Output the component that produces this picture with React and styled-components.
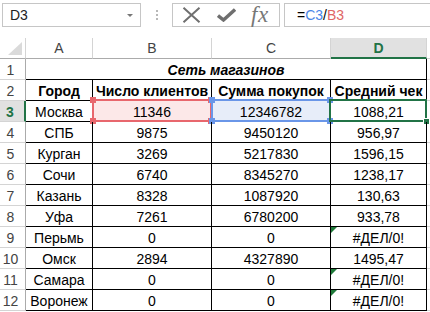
import React from "react";
import styled, { createGlobalStyle } from "styled-components";

const GlobalStyle = createGlobalStyle`
  html, body {
    margin: 0;
    padding: 0;
    background: #ffffff;
  }
  body {
    font-family: "Liberation Sans", Arial, sans-serif;
    font-size: 14px;
    color: #000;
  }
`;

const Page = styled.div`
  width: 430px;
  height: 312px;
  overflow: hidden;
  background: #fff;
`;

// ---- formula bar ----
const FormulaBar = styled.div`
  display: flex;
  align-items: flex-start;
  height: 38px;
  padding: 3px 0 0 2px;
  box-sizing: border-box;
`;

const NameBox = styled.div`
  width: 139px;
  height: 24px;
  box-sizing: border-box;
  border: 1px solid #c6c6c6;
  display: flex;
  align-items: center;
  justify-content: space-between;
  padding: 0 7px 0 7px;
  font-size: 14px;
  color: #222;
`;

const DropArrow = styled.span`
  width: 0;
  height: 0;
  border-left: 3.5px solid transparent;
  border-right: 3.5px solid transparent;
  border-top: 3.5px solid #777;
`;

const Dots = styled.div`
  width: 31px;
  height: 24px;
  display: flex;
  flex-direction: column;
  align-items: center;
  justify-content: center;
  gap: 2px;

  span {
    width: 2px;
    height: 2px;
    background: #b8b8b8;
  }
`;

const ButtonsBox = styled.div`
  width: 108px;
  height: 24px;
  box-sizing: border-box;
  border: 1px solid #c6c6c6;
  display: flex;
  align-items: center;
  padding-left: 9px;
  gap: 16px;
`;

const FxText = styled.span`
  font-family: "Liberation Serif", "Times New Roman", serif;
  font-style: italic;
  font-size: 23px;
  color: #777;
  letter-spacing: 0.5px;
  line-height: 1;
  margin-left: -1px;
  margin-top: -1px;
`;

const FormulaInput = styled.div`
  flex: 1;
  margin-left: 4px;
  height: 24px;
  box-sizing: border-box;
  border: 1px solid #c6c6c6;
  border-right: none;
  display: flex;
  align-items: center;
  padding-left: 12px;
  font-size: 14px;
`;

const Ref = styled.span`
  color: ${(p) => p.color};
`;

// ---- sheet ----
const Sheet = styled.div`
  display: grid;
  grid-template-columns: 26px 67px 119px 119px 96px 1fr;
  grid-auto-rows: 21px;
`;

const Corner = styled.div`
  box-sizing: border-box;
  border-right: 1px solid #d4d4d4;
  border-bottom: 1px solid #ababab;
  display: flex;
  align-items: flex-end;
  justify-content: flex-end;
  padding: 0 3px 3px 0;
`;

const ColHead = styled.div`
  box-sizing: border-box;
  border-right: 1px solid #d4d4d4;
  border-bottom: ${(p) => (p.active ? "2px solid #217346" : "1px solid #ababab")};
  background: ${(p) => (p.active ? "#e1e1e1" : "#fff")};
  color: ${(p) => (p.active ? "#217346" : "#444")};
  font-weight: ${(p) => (p.active ? "bold" : "normal")};
  display: flex;
  align-items: center;
  justify-content: center;
  padding-top: ${(p) => (p.active ? "1px" : "0")};
`;

const RowHead = styled.div`
  box-sizing: border-box;
  border-right: ${(p) => (p.active ? "2px solid #217346" : "1px solid #ababab")};
  border-bottom: 1px solid #d4d4d4;
  background: ${(p) => (p.active ? "#e1e1e1" : "#fff")};
  color: ${(p) => (p.active ? "#217346" : "#444")};
  font-weight: ${(p) => (p.active ? "bold" : "normal")};
  display: flex;
  align-items: center;
  justify-content: center;
  padding: 1px 4px 0 0;
`;

const Cell = styled.div`
  box-sizing: border-box;
  position: relative;
  border-right: 1px solid #000;
  border-bottom: 1px solid #000;
  display: flex;
  align-items: center;
  justify-content: center;
  padding-top: 1px;
  white-space: nowrap;
  font-weight: ${(p) => (p.bold ? "bold" : "normal")};
  font-style: ${(p) => (p.italic ? "italic" : "normal")};
  background: ${(p) => p.fill || "transparent"};
  grid-column: ${(p) => (p.span ? `span ${p.span}` : "auto")};
`;

const Outside = styled.div`
  box-sizing: border-box;
  border-bottom: 1px solid #d4d4d4;
`;

const RefBox = styled.div`
  position: absolute;
  top: -2px;
  left: -1px;
  right: -1px;
  bottom: -1px;
  border: 2px solid ${(p) => p.color};
  pointer-events: none;
`;

const Handle = styled.span`
  position: absolute;
  width: 6px;
  height: 6px;
  background: ${(p) => p.color};
  ${(p) => (p.top ? "top: -4px;" : "bottom: -4px;")}
  ${(p) => (p.left ? "left: -4px;" : "right: -4px;")}
`;

const Selection = styled.div`
  position: absolute;
  top: -2px;
  left: -2px;
  right: -1px;
  bottom: -1px;
  border: 2px solid #217346;
  pointer-events: none;
`;

const FillHandle = styled.span`
  position: absolute;
  right: -5px;
  bottom: -5px;
  width: 5px;
  height: 5px;
  background: #217346;
  border: 1px solid #fff;
`;

const ErrorMark = styled.span`
  position: absolute;
  top: 0;
  left: 0;
  width: 0;
  height: 0;
  border-top: 6px solid #1f7a3a;
  border-right: 6px solid transparent;
`;

const rows = [
  ["Москва", "11346", "12346782", "1088,21"],
  ["СПБ", "9875", "9450120", "956,97"],
  ["Курган", "3269", "5217830", "1596,15"],
  ["Сочи", "6740", "8345270", "1238,17"],
  ["Казань", "8328", "1087920", "130,63"],
  ["Уфа", "7261", "6780200", "933,78"],
  ["Перьмь", "0", "0", "#ДЕЛ/0!"],
  ["Омск", "2894", "4327890", "1495,47"],
  ["Самара", "0", "0", "#ДЕЛ/0!"],
  ["Воронеж", "0", "0", "#ДЕЛ/0!"],
];

const RefCorners = ({ color }) => (
  <>
    <Handle color={color} top left />
    <Handle color={color} top />
    <Handle color={color} left />
    <Handle color={color} />
  </>
);

const App = () => {
  return (
    <Page>
      <GlobalStyle />
      <FormulaBar>
        <NameBox>
          D3
          <DropArrow />
        </NameBox>
        <Dots>
          <span />
          <span />
          <span />
        </Dots>
        <ButtonsBox>
          <svg width="19" height="16" viewBox="0 0 19 16">
            <path d="M1.5 0.8 L17.5 15.2 M17.5 0.8 L1.5 15.2" stroke="#6f6f6f" strokeWidth="2" fill="none" />
          </svg>
          <svg width="19" height="14" viewBox="0 0 19 14">
            <path d="M1 7.5 L6.5 12 L18 1.5" stroke="#6f6f6f" strokeWidth="3.4" fill="none" />
          </svg>
          <FxText>fx</FxText>
        </ButtonsBox>
        <FormulaInput>
          =<Ref color="#4a86e8">C3</Ref>/<Ref color="#e06666">B3</Ref>
        </FormulaInput>
      </FormulaBar>

      <Sheet>
        <Corner>
          <svg width="14" height="13" viewBox="0 0 14 13">
            <polygon points="14,0 14,13 0,13" fill="#dadada" />
          </svg>
        </Corner>
        <ColHead>A</ColHead>
        <ColHead>B</ColHead>
        <ColHead>C</ColHead>
        <ColHead active>D</ColHead>
        <Outside />

        <RowHead>1</RowHead>
        <Cell span={4} bold italic>
          Сеть магазинов
        </Cell>
        <Outside />

        <RowHead>2</RowHead>
        <Cell bold>Город</Cell>
        <Cell bold>Число клиентов</Cell>
        <Cell bold>Сумма покупок</Cell>
        <Cell bold>Средний чек</Cell>
        <Outside />

        {rows.map((r, i) => {
          const n = i + 3;
          const first = n === 3;
          const isError = r[3].startsWith("#");
          return (
            <React.Fragment key={n}>
              <RowHead active={first}>{n}</RowHead>
              <Cell>{r[0]}</Cell>
              <Cell fill={first ? "#fce8e8" : undefined}>
                {r[1]}
                {first && (
                  <RefBox color="#e8676d">
                    <RefCorners color="#e8676d" />
                  </RefBox>
                )}
              </Cell>
              <Cell fill={first ? "#e7edf9" : undefined}>
                {r[2]}
                {first && (
                  <RefBox color="#6a96e8">
                    <RefCorners color="#6a96e8" />
                  </RefBox>
                )}
              </Cell>
              <Cell>
                {isError && <ErrorMark />}
                {r[3]}
                {first && (
                  <Selection>
                    <FillHandle />
                  </Selection>
                )}
              </Cell>
              <Outside />
            </React.Fragment>
          );
        })}
      </Sheet>
    </Page>
  );
};

export default App;
